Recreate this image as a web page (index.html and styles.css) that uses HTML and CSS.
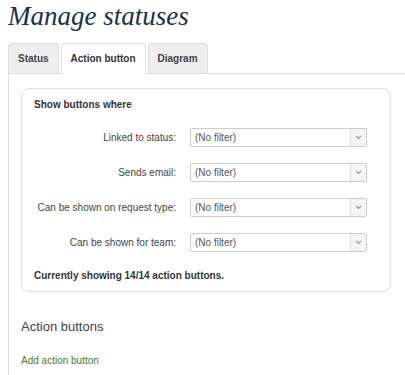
FILE: index.html
```html
<!DOCTYPE html>
<html lang="en">
<head>
  <meta charset="UTF-8">
  <meta name="viewport" content="width=device-width, initial-scale=1.0">
  <title>Manage statuses</title>
  <link rel="stylesheet" href="styles.css">
</head>
<body>
  <h1>Manage statuses</h1>

  <ul class="tabs">
    <li class="tab">Status</li>
    <li class="tab active">Action button</li>
    <li class="tab">Diagram</li>
  </ul>

  <div class="panel">
    <div class="filter-box">
      <h3>Show buttons where</h3>

      <div class="filters">
        <label>Linked to status:</label>
        <div class="select"><span>(No filter)</span><span class="arrow"><svg width="7" height="5" viewBox="0 0 7 5"><path d="M1 1 L3.5 3.5 L6 1" fill="none" stroke="#999" stroke-width="1.2"/></svg></span></div>

        <label>Sends email:</label>
        <div class="select"><span>(No filter)</span><span class="arrow"><svg width="7" height="5" viewBox="0 0 7 5"><path d="M1 1 L3.5 3.5 L6 1" fill="none" stroke="#999" stroke-width="1.2"/></svg></span></div>

        <label>Can be shown on request type:</label>
        <div class="select"><span>(No filter)</span><span class="arrow"><svg width="7" height="5" viewBox="0 0 7 5"><path d="M1 1 L3.5 3.5 L6 1" fill="none" stroke="#999" stroke-width="1.2"/></svg></span></div>

        <label>Can be shown for team:</label>
        <div class="select"><span>(No filter)</span><span class="arrow"><svg width="7" height="5" viewBox="0 0 7 5"><path d="M1 1 L3.5 3.5 L6 1" fill="none" stroke="#999" stroke-width="1.2"/></svg></span></div>
      </div>

      <p class="count">Currently showing 14/14 action buttons.</p>
    </div>

    <h2>Action buttons</h2>
    <a class="add-link" href="#">Add action button</a>
  </div>
</body>
</html>
```

FILE: styles.css
```css
body {
  font-family: 'Liberation Sans', Arial, sans-serif;
  font-size: 10px;
  color: #444;
  margin: 0 0 0 8px;
  background: #fff;
  overflow: hidden;
}
h1 {
  font-family: 'Liberation Serif', 'Times New Roman', serif;
  font-style: italic;
  font-weight: normal;
  font-size: 27px;
  line-height: 32px;
  color: #1a3052;
  margin: 0 0 11px 0;
}
.tabs {
  list-style: none;
  margin: 0;
  padding: 0;
  display: flex;
  gap: 2px;
  border-bottom: 1px solid #ddd;
  height: 30px;
}
.tab {
  font-weight: bold;
  color: #444;
  background: #eee;
  border: 1px solid #ddd;
  border-bottom: none;
  border-radius: 4px 4px 0 0;
  padding: 0 9px;
  height: 29px;
  line-height: 29px;
}
.tab.active {
  background: #fff;
  height: 30px;
  color: #333;
}
.panel {
  border-left: 1px solid #ddd;
  padding: 14px 14px 20px 12px;
}
.filter-box {
  border: 1px solid #ddd;
  border-radius: 8px;
  padding: 10px 12px 9px 12px;
}
.filter-box h3 {
  font-size: 10px;
  line-height: 12px;
  color: #333;
  margin: 0 0 17px 0;
}
.filters {
  display: grid;
  grid-template-columns: 142px 177px;
  column-gap: 14px;
  row-gap: 16px;
  align-items: center;
}
.filters label {
  text-align: right;
  color: #444;
}
.select {
  display: flex;
  height: 19px;
  border: 1px solid #ccc;
  border-radius: 2px;
  box-sizing: border-box;
  color: #555;
  line-height: 17px;
}
.select span:first-child {
  flex: 1;
  padding-left: 4px;
}
.arrow {
  width: 15px;
  background: #f4f4f4;
  border-left: 1px solid #ddd;
  display: flex;
  align-items: center;
  justify-content: center;
}
.count {
  font-weight: bold;
  color: #333;
  line-height: 12px;
  margin: 18px 0 0 0;
}
h2 {
  font-size: 13px;
  font-weight: normal;
  line-height: 16px;
  color: #444;
  margin: 27px 0 20px 0;
}
.add-link {
  color: #4e7d0e;
  text-decoration: none;
  line-height: 12px;
}
```
